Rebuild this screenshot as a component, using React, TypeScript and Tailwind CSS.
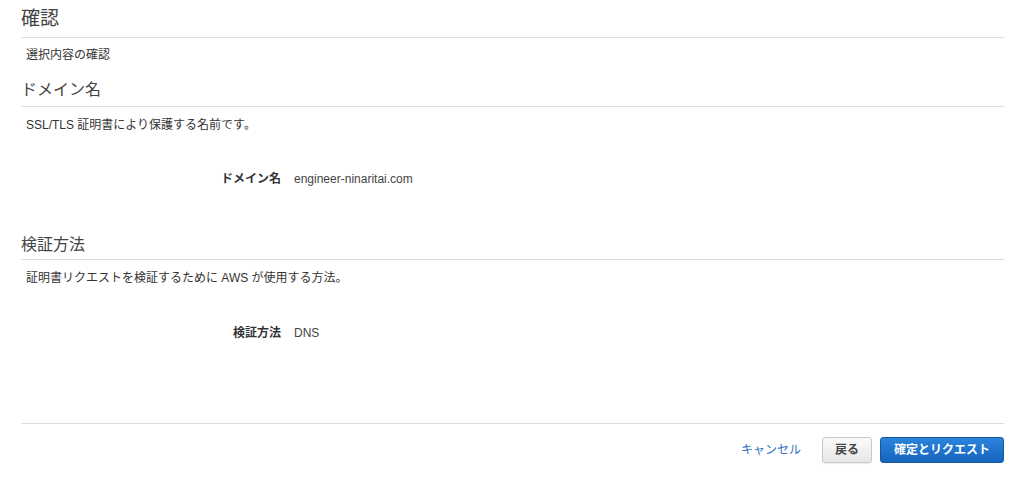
import React from "react";

const font = {
  fontFamily: '"Liberation Sans", Arial, "Noto Sans CJK JP", sans-serif',
};

interface Field {
  label: string;
  value: string;
}

function DetailRow({ label, value }: Field) {
  return (
    <div className="flex items-center text-[12px] leading-[18px]">
      <div className="w-[260px] text-right font-bold text-[#333]">{label}</div>
      <div className="ml-[13px] text-[#444]">{value}</div>
    </div>
  );
}

export default function App() {
  return (
    <div className="min-h-[489px] w-full bg-white pl-[21px] pr-[20px] text-[#333]" style={font}>
      {/* Page header */}
      <h1 className="border-b border-[#ddd] pt-[7px] pb-[6px] text-[19px] leading-[24px] font-normal text-[#444]">
        確認
      </h1>
      <p className="mt-[8px] pl-[5px] text-[12px] leading-[18px]">選択内容の確認</p>

      {/* Domain section */}
      <h2 className="mt-[14px] border-b border-[#ddd] pb-[4px] text-[16px] leading-[24px] font-normal text-[#444]">
        ドメイン名
      </h2>
      <p className="mt-[9px] pl-[5px] text-[12px] leading-[18px]">
        SSL/TLS 証明書により保護する名前です。
      </p>
      <div className="mt-[36px]">
        <DetailRow label="ドメイン名" value="engineer-ninaritai.com" />
      </div>

      {/* Validation section */}
      <h2 className="mt-[45px] border-b border-[#ddd] pb-[2px] text-[16px] leading-[24px] font-normal text-[#444]">
        検証方法
      </h2>
      <p className="mt-[9px] pl-[5px] text-[12px] leading-[18px]">
        証明書リクエストを検証するために AWS が使用する方法。
      </p>
      <div className="mt-[37px]">
        <DetailRow label="検証方法" value="DNS" />
      </div>

      {/* Actions */}
      <div className="mt-[81px] border-t border-[#ddd]">
        <div className="mt-[13px] flex items-center justify-end">
          <a href="#" className="mr-[21px] text-[12px] text-[#2e73c2] hover:underline">
            キャンセル
          </a>
          <button className="h-[26px] rounded-[3px] border border-[#c8c8c8] bg-gradient-to-b from-[#fbfbfb] to-[#e6e6e6] px-[12px] text-[12px] font-bold text-[#444] shadow-[0_1px_1px_rgba(0,0,0,0.08)]">
            戻る
          </button>
          <button className="ml-[8px] h-[26px] rounded-[3px] border border-[#15589e] bg-gradient-to-b from-[#2c84db] to-[#1664be] px-[13px] text-[12px] font-bold text-white">
            確定とリクエスト
          </button>
        </div>
      </div>
    </div>
  );
}
